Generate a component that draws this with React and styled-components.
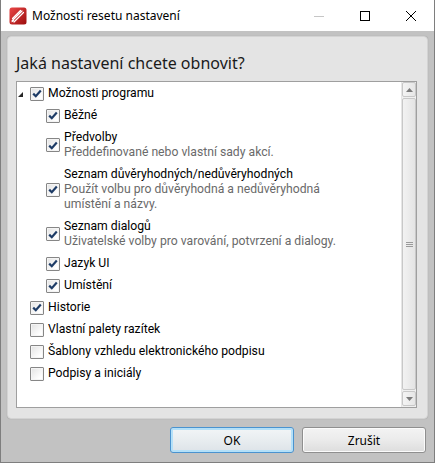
import React from "react";
import styled, { createGlobalStyle } from "styled-components";

const Global = createGlobalStyle`
  html, body { margin: 0; padding: 0; background: #c4c4c4; }
  body { font-family: "Noto Sans", "Open Sans", sans-serif; }
  * { box-sizing: border-box; }
`;

const Window = styled.div`
  width: 435px;
  height: 463px;
  display: flex;
  flex-direction: column;
  border: 1px solid #7e7e7e;
  border-top: none;
  background: #c2c2c2;
`;

const TitleBar = styled.div`
  height: 31px;
  background: #ffffff;
  display: flex;
  align-items: center;
  padding-left: 8px;
  flex-shrink: 0;
`;

const TitleText = styled.div`
  margin-left: 5px;
  font-size: 12px;
  color: #000;
  flex: 1;
  line-height: 16px;
`;

const Controls = styled.div`
  display: flex;
  align-items: center;
  height: 100%;
`;

const CtrlBtn = styled.div`
  width: 46px;
  height: 100%;
  display: flex;
  align-items: center;
  justify-content: center;
`;

const Frame = styled.div`
  flex: 1;
  display: flex;
  flex-direction: column;
  padding: 5px 6px 0 6px;
`;

const Panel = styled.div`
  height: 383px;
  background: #e4e4e4;
  border: 1px solid #d3d3d3;
  border-radius: 4px;
  padding: 16px 10px 10px 8px;
  display: flex;
  flex-direction: column;
  box-shadow: 0 0 1px rgba(0,0,0,0.2);
`;

const Heading = styled.div`
  font-size: 16px;
  line-height: 20px;
  color: #1a1a1a;
  margin-bottom: 8px;
`;

const ListBox = styled.div`
  flex: 1;
  background: #ffffff;
  border: 1px solid #9f9f9f;
  display: flex;
`;

const Tree = styled.div`
  flex: 1;
  display: flex;
  flex-direction: column;
`;

const Row = styled.div`
  display: flex;
  align-items: center;
  padding: 4px 0 3px ${p => (p.$level === 2 ? 29 : 13)}px;
  position: relative;
`;

const Expander = styled.div`
  width: 0;
  height: 0;
  border-left: 5px solid transparent;
  border-bottom: 5px solid #262626;
  position: absolute;
  left: 1px;
  top: 10px;
`;

const Box = styled.div`
  width: 14px;
  height: 14px;
  border: 1px solid #868686;
  border-radius: 1px;
  background: linear-gradient(135deg, #e2e2e2 0%, #ffffff 80%);
  box-shadow: inset 0 0 0 1px #f4f4f4;
  display: flex;
  align-items: center;
  justify-content: center;
  flex-shrink: 0;
  margin-right: 4px;
`;

const Texts = styled.div`
  display: flex;
  flex-direction: column;
  font-family: Roboto, "Noto Sans", sans-serif;
  font-size: 12.2px;
  line-height: 15px;
`;

const Label = styled.span`
  color: #000;
  white-space: nowrap;
`;

const Sub = styled.span`
  color: #6a6a6a;
  white-space: nowrap;
`;

const ScrollBar = styled.div`
  width: 15px;
  display: flex;
  flex-direction: column;
  background: #f0f0f0;
  border-left: 1px solid #e6e6e6;
`;

const SBtn = styled.div`
  height: 15px;
  margin: 0 0 1px 0;
  border: 1px solid #c8c8c8;
  border-radius: 2px;
  background: linear-gradient(90deg, #f4f4f4, #e6e6e6);
  display: flex;
  align-items: center;
  justify-content: center;
`;

const Thumb = styled.div`
  flex: 1;
  margin-bottom: 1px;
  border: 1px solid #c8c8c8;
  border-radius: 2px;
  background: linear-gradient(90deg, #f2f2f2, #e4e4e4);
  display: flex;
  align-items: center;
  justify-content: center;
`;

const Grip = styled.div`
  width: 7px;
  height: 5px;
  background: repeating-linear-gradient(180deg, #9a9a9a 0 1px, transparent 1px 2px);
`;

const ButtonRow = styled.div`
  display: flex;
  justify-content: flex-end;
  gap: 8px;
  padding: 8px 2px 0 0;
`;

const Button = styled.div`
  width: 124px;
  height: 26px;
  border-radius: 3px;
  border: 1px solid ${p => (p.$default ? "#4a93cf" : "#8f8f8f")};
  box-shadow: ${p => (p.$default ? "inset 0 0 0 2px #b4e0f8" : "inset 0 0 0 1px #fbfbfb")};
  background: ${p =>
    p.$default
      ? "linear-gradient(180deg, #f2f5f7 0%, #e8edf0 50%, #dde3e8 100%)"
      : "linear-gradient(180deg, #f3f3f3 0%, #ebebeb 50%, #dddddd 100%)"};
  display: flex;
  align-items: center;
  justify-content: center;
  font-size: 12px;
  color: #000;
`;

const Check = () => (
  <svg width="10" height="9" viewBox="0 0 10 9">
    <path d="M1.2 4.6 L3.8 7.2 L8.8 1.6" fill="none" stroke="#1d3b66" strokeWidth="2.2" strokeLinejoin="miter" />
  </svg>
);

const CheckBox = ({ checked }) => <Box>{checked && <Check />}</Box>;

const AppIcon = () => (
  <svg width="18" height="18" viewBox="0 0 18 18">
    <defs>
      <linearGradient id="rg" x1="0" y1="0" x2="1" y2="1">
        <stop offset="0" stopColor="#ea4646" />
        <stop offset="1" stopColor="#9c0e0e" />
      </linearGradient>
    </defs>
    <rect x="0.5" y="0.5" width="17" height="17" rx="2.5" fill="url(#rg)" />
    <path d="M3 14 L13 4 M5 15 L14.5 5.5 M3.5 11.5 L11.5 3.5" stroke="#fff" strokeWidth="1.2" strokeLinecap="round" />
    <path d="M2.5 15.5 L4 12.5 L5.5 14 Z" fill="#fff" />
  </svg>
);

const items = [
  { level: 1, label: "Možnosti programu", checked: true, expander: true },
  { level: 2, label: "Běžné", checked: true },
  { level: 2, label: "Předvolby", sub: ["Předdefinované nebo vlastní sady akcí."], checked: true },
  {
    level: 2,
    label: "Seznam důvěryhodných/nedůvěryhodných",
    sub: ["Použít volbu pro důvěryhodná a nedůvěryhodná", "umístění a názvy."],
    checked: true,
  },
  { level: 2, label: "Seznam dialogů", sub: ["Uživatelské volby pro varování, potvrzení a dialogy."], checked: true },
  { level: 2, label: "Jazyk UI", checked: true },
  { level: 2, label: "Umístění", checked: true },
  { level: 1, label: "Historie", checked: true },
  { level: 1, label: "Vlastní palety razítek", checked: false },
  { level: 1, label: "Šablony vzhledu elektronického podpisu", checked: false },
  { level: 1, label: "Podpisy a iniciály", checked: false },
];

export default function App() {
  return (
    <>
      <Global />
      <Window>
        <TitleBar>
          <AppIcon />
          <TitleText>Možnosti resetu nastavení</TitleText>
          <Controls>
            <CtrlBtn>
              <svg width="10" height="10" viewBox="0 0 10 10">
                <path d="M0 5.5 H10" stroke="#c6c6c6" strokeWidth="1" />
              </svg>
            </CtrlBtn>
            <CtrlBtn>
              <svg width="10" height="10" viewBox="0 0 10 10">
                <rect x="0.5" y="0.5" width="9" height="9" fill="none" stroke="#000" strokeWidth="1" />
              </svg>
            </CtrlBtn>
            <CtrlBtn>
              <svg width="10" height="10" viewBox="0 0 10 10">
                <path d="M0 0 L10 10 M10 0 L0 10" stroke="#000" strokeWidth="1" />
              </svg>
            </CtrlBtn>
          </Controls>
        </TitleBar>
        <Frame>
          <Panel>
            <Heading>Jaká nastavení chcete obnovit?</Heading>
            <ListBox>
              <Tree>
                {items.map((it, i) => (
                  <Row key={i} $level={it.level}>
                    {it.expander && <Expander />}
                    <CheckBox checked={it.checked} />
                    <Texts>
                      <Label>{it.label}</Label>
                      {it.sub && it.sub.map((s, j) => <Sub key={j}>{s}</Sub>)}
                    </Texts>
                  </Row>
                ))}
              </Tree>
              <ScrollBar>
                <SBtn>
                  <svg width="7" height="4" viewBox="0 0 7 4"><path d="M3.5 0 L7 4 L0 4 Z" fill="#7b7b7b" /></svg>
                </SBtn>
                <Thumb><Grip /></Thumb>
                <SBtn>
                  <svg width="7" height="4" viewBox="0 0 7 4"><path d="M0 0 L7 0 L3.5 4 Z" fill="#7b7b7b" /></svg>
                </SBtn>
              </ScrollBar>
            </ListBox>
          </Panel>
          <ButtonRow>
            <Button $default>OK</Button>
            <Button>Zrušit</Button>
          </ButtonRow>
        </Frame>
      </Window>
    </>
  );
}
